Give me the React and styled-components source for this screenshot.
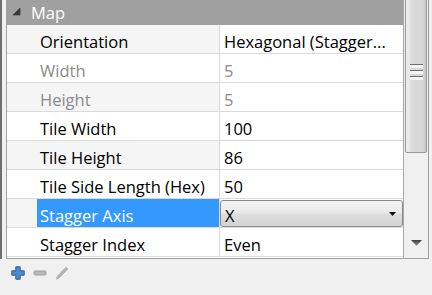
import React from "react";
import styled, { createGlobalStyle } from "styled-components";

const GlobalStyle = createGlobalStyle`
  html, body {
    margin: 0;
    padding: 0;
    background: #f0f0f0;
  }
  body {
    font-family: "Open Sans", "Noto Sans", sans-serif;
  }
`;

// 속성 목록 데이터
const rows = [
  { name: "Orientation", value: "Hexagonal (Stagger..." },
  { name: "Width", value: "5", disabled: true },
  { name: "Height", value: "5", disabled: true },
  { name: "Tile Width", value: "100" },
  { name: "Tile Height", value: "86" },
  { name: "Tile Side Length (Hex)", value: "50" },
  { name: "Stagger Axis", value: "X", selected: true, combo: true },
  { name: "Stagger Index", value: "Even" },
];

const App = () => {
  return (
    <React.Fragment>
      <GlobalStyle />
      <Page>
        <Main>
          <Splitter />
          <Frame>
            <Table>
              <GroupHeader>
                <Expander viewBox="0 0 9 9">
                  <path d="M8 1 L8 8 L1 8 Z" fill="#3c3c3c" stroke="#3c3c3c" strokeWidth="0.8" strokeLinejoin="round" />
                </Expander>
                <GroupTitle>Map</GroupTitle>
              </GroupHeader>
              {rows.map((row, i) => (
                <Row key={row.name} $odd={i % 2 === 0}>
                  <Indent />
                  <NameCell $selected={row.selected} $disabled={row.disabled}>
                    {row.name}
                  </NameCell>
                  <ValueCell $disabled={row.disabled}>
                    {row.combo ? (
                      <Combo>
                        <span>{row.value}</span>
                        <ComboArrow viewBox="0 0 7 4">
                          <path d="M0 0 L7 0 L3.5 4 Z" fill="#111" />
                        </ComboArrow>
                      </Combo>
                    ) : (
                      row.value
                    )}
                  </ValueCell>
                </Row>
              ))}
            </Table>
            <ScrollBar>
              <Thumb>
                <Grip>
                  <span />
                  <span />
                  <span />
                </Grip>
              </Thumb>
              <Track>
                <DownArrow viewBox="0 0 11 6">
                  <defs>
                    <linearGradient id="arr" x1="0" y1="0" x2="0" y2="1">
                      <stop offset="0" stopColor="#3a3a3a" />
                      <stop offset="1" stopColor="#9a9a9a" />
                    </linearGradient>
                  </defs>
                  <path d="M0 0 L11 0 L5.5 6 Z" fill="url(#arr)" />
                </DownArrow>
              </Track>
            </ScrollBar>
          </Frame>
        </Main>
        <Toolbar>
          <ToolIcon viewBox="0 0 14 14">
            <path
              d="M4.8 0.8 H9.2 V4.8 H13.2 V9.2 H9.2 V13.2 H4.8 V9.2 H0.8 V4.8 H4.8 Z"
              fill="#4d8ad0"
              stroke="#2a5a96"
              strokeWidth="1"
              strokeLinejoin="round"
            />
          </ToolIcon>
          <ToolIcon viewBox="0 0 14 14">
            <rect x="1" y="5" width="12" height="4" rx="1.2" fill="#b8b8b8" stroke="#a2a2a2" strokeWidth="1" />
          </ToolIcon>
          <ToolIcon viewBox="0 0 14 14">
            <path d="M1.5 13.2 L2.4 10.2 L11 1.2 L12.8 3 L4.2 11.8 Z" fill="#b4b4b4" stroke="#a8a8a8" strokeWidth="0.8" strokeLinejoin="round" />
          </ToolIcon>
        </Toolbar>
      </Page>
    </React.Fragment>
  );
};

const Page = styled.div`
  width: 432px;
  height: 295px;
  display: flex;
  flex-direction: column;
  overflow: hidden;
  background: #f0f0f0;
`;

const Main = styled.div`
  display: flex;
  height: 259px;
`;

const Splitter = styled.div`
  width: 2px;
  margin-right: 4px;
  background: #6e6e6e;
`;

const Frame = styled.div`
  display: flex;
  width: 423px;
  border-left: 1px solid #a0a0a0;
  border-right: 1px solid #9c9c9c;
  border-bottom: 1px solid #a0a0a0;
  box-sizing: border-box;
  background: #ffffff;
`;

const Table = styled.div`
  width: 397px;
  border-right: 1px solid #a8a8a8;
  box-sizing: border-box;
  display: flex;
  flex-direction: column;
  font-size: 16.5px;
`;

const GroupHeader = styled.div`
  height: 25px;
  display: flex;
  align-items: center;
  background: #a0a0a0;
  color: #ffffff;
`;

const Expander = styled.svg`
  width: 9px;
  height: 9px;
  margin: 0 0 2px 5px;
`;

const GroupTitle = styled.span`
  margin-left: 10px;
  line-height: 25px;
`;

const Row = styled.div`
  height: 29px;
  display: flex;
  box-sizing: border-box;
  border-bottom: 1px solid #dadada;
  background: ${(p) => (p.$odd ? "#f5f5f5" : "#ffffff")};
`;

const Indent = styled.div`
  width: 30px;
`;

const NameCell = styled.div`
  width: 183px;
  padding: 5px 0 0 3px;
  box-sizing: border-box;
  line-height: 23px;
  border-right: 1px solid #dadada;
  color: ${(p) => (p.$selected ? "#ffffff" : p.$disabled ? "#8a8a8a" : "#000000")};
  background: ${(p) => (p.$selected ? "#3399ff" : "transparent")};
  white-space: nowrap;
`;

const ValueCell = styled.div`
  flex: 1;
  padding: 5px 0 0 4px;
  line-height: 23px;
  color: ${(p) => (p.$disabled ? "#8a8a8a" : "#000000")};
  white-space: nowrap;
  overflow: hidden;
  background: #ffffff;
`;

const Combo = styled.div`
  margin: -4px 0 0 -4px;
  height: 27px;
  box-sizing: border-box;
  border: 1px solid #8a8a8a;
  border-radius: 3px;
  background: linear-gradient(#f2f2f2 0%, #ebebeb 45%, #dddddd 55%, #d2d2d2 100%);
  display: flex;
  align-items: center;
  justify-content: space-between;
  padding: 3px 6px 0 4px;
  line-height: 23px;
`;

const ComboArrow = styled.svg`
  width: 7px;
  height: 4px;
  margin-bottom: 3px;
`;

const ScrollBar = styled.div`
  width: 24px;
  display: flex;
  flex-direction: column;
  background: #ececec;
`;

const Thumb = styled.div`
  height: 155px;
  margin: -2px 0 0 1px;
  width: 22px;
  box-sizing: border-box;
  border: 1px solid #9a9a9a;
  border-radius: 2px;
  background: linear-gradient(to right, #eeeeee 0%, #e6e6e6 20%, #dadada 25%, #d6d6d6 85%, #c4c4c4 100%);
  display: flex;
  justify-content: center;
  align-items: flex-start;
  padding-top: 65px;
`;

const Grip = styled.div`
  display: flex;
  flex-direction: column;
  gap: 2px;
  & span {
    display: block;
    width: 13px;
    height: 3px;
    border-top: 1px solid #6e6e6e;
    background: #f4f4f4;
  }
`;

const Track = styled.div`
  flex: 1;
  display: flex;
  align-items: flex-end;
  justify-content: center;
  padding-bottom: 12px;
  background: #f0f0f0;
`;

const DownArrow = styled.svg`
  width: 11px;
  height: 6px;
`;

const Toolbar = styled.div`
  display: flex;
  align-items: center;
  gap: 8px;
  padding: 0 0 0 11px;
  height: 27px;
`;

const ToolIcon = styled.svg`
  width: 14px;
  height: 14px;
`;

export default App;
